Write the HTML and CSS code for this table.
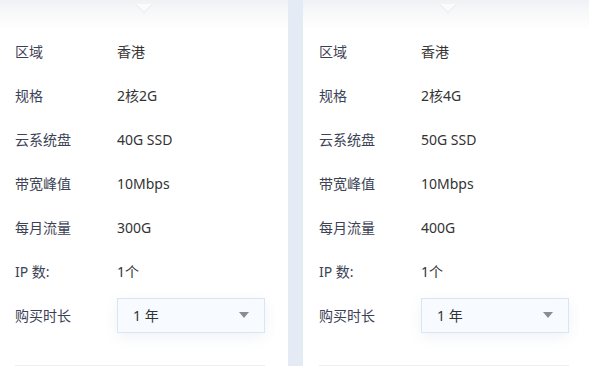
FILE: index.html
```html
<!DOCTYPE html>
<html>
<head>
<meta charset="utf-8">
<link rel="stylesheet" href="styles.css">
</head>
<body>
<div class="wrap">
  <div class="card card-left">
    <div class="notch"></div>
    <div class="rows">
      <div class="row"><span class="label">区域</span><span class="value">香港</span></div>
      <div class="row"><span class="label">规格</span><span class="value">2核2G</span></div>
      <div class="row"><span class="label">云系统盘</span><span class="value">40G SSD</span></div>
      <div class="row"><span class="label">带宽峰值</span><span class="value">10Mbps</span></div>
      <div class="row"><span class="label">每月流量</span><span class="value">300G</span></div>
      <div class="row"><span class="label">IP 数:</span><span class="value">1个</span></div>
      <div class="row"><span class="label">购买时长</span>
        <div class="select"><span>1 年</span><i class="caret"></i></div>
      </div>
    </div>
    <div class="divider"></div>
  </div>
  <div class="card card-right">
    <div class="notch"></div>
    <div class="rows">
      <div class="row"><span class="label">区域</span><span class="value">香港</span></div>
      <div class="row"><span class="label">规格</span><span class="value">2核4G</span></div>
      <div class="row"><span class="label">云系统盘</span><span class="value">50G SSD</span></div>
      <div class="row"><span class="label">带宽峰值</span><span class="value">10Mbps</span></div>
      <div class="row"><span class="label">每月流量</span><span class="value">400G</span></div>
      <div class="row"><span class="label">IP 数:</span><span class="value">1个</span></div>
      <div class="row"><span class="label">购买时长</span>
        <div class="select"><span>1 年</span><i class="caret"></i></div>
      </div>
    </div>
    <div class="divider"></div>
  </div>
</div>
</body>
</html>
```
FILE: styles.css
```css
html, body {
  margin: 0;
  padding: 0;
  background: #e5ebf5;
  overflow: hidden;
}
.wrap {
  display: flex;
  gap: 15px;
  width: 610px;
  height: 366px;
  font-family: "Noto Sans", "Noto Sans CJK SC", sans-serif;
  font-size: 14px;
}
.card {
  position: relative;
  width: 288px;
  flex: none;
  height: 366px;
  background: linear-gradient(to bottom, #f0f1f4 0px, #f6f7f9 10px, #fcfcfd 22px, #ffffff 30px);
  box-sizing: border-box;
}
.card-left { padding-left: 15px; padding-right: 23px; }
.card-right { padding-left: 16px; padding-right: 22px; }
.notch {
  position: absolute;
  top: 4px;
  width: 0;
  height: 0;
  border-left: 8px solid transparent;
  border-right: 8px solid transparent;
  border-top: 8px solid #fbfbfc;
  filter: drop-shadow(0 1px 0 #e6e7ea);
}
.card-left .notch { left: 136px; }
.card-right .notch { left: 137px; }
.rows {
  padding-top: 29px;
  display: flex;
  flex-direction: column;
}
.row {
  display: flex;
  align-items: center;
  height: 44px;
}
.label {
  width: 102px;
  flex: none;
  color: #3b4254;
}
.value {
  color: #333;
}
.select {
  width: 148px;
  height: 35px;
  box-sizing: border-box;
  border: 1px solid #d8e6f4;
  background: #f7fbff;
  display: flex;
  align-items: center;
  justify-content: space-between;
  padding: 0 15px 0 15px;
  color: #333;
  box-shadow: 0 4px 14px rgba(60, 90, 140, 0.08);
}
.caret {
  width: 0;
  height: 0;
  border-left: 5px solid transparent;
  border-right: 5px solid transparent;
  border-top: 6px solid #8a8d94;
}
.divider {
  margin-top: 28px;
  height: 1px;
  background: #eceef1;
  width: 250px;
}
```
